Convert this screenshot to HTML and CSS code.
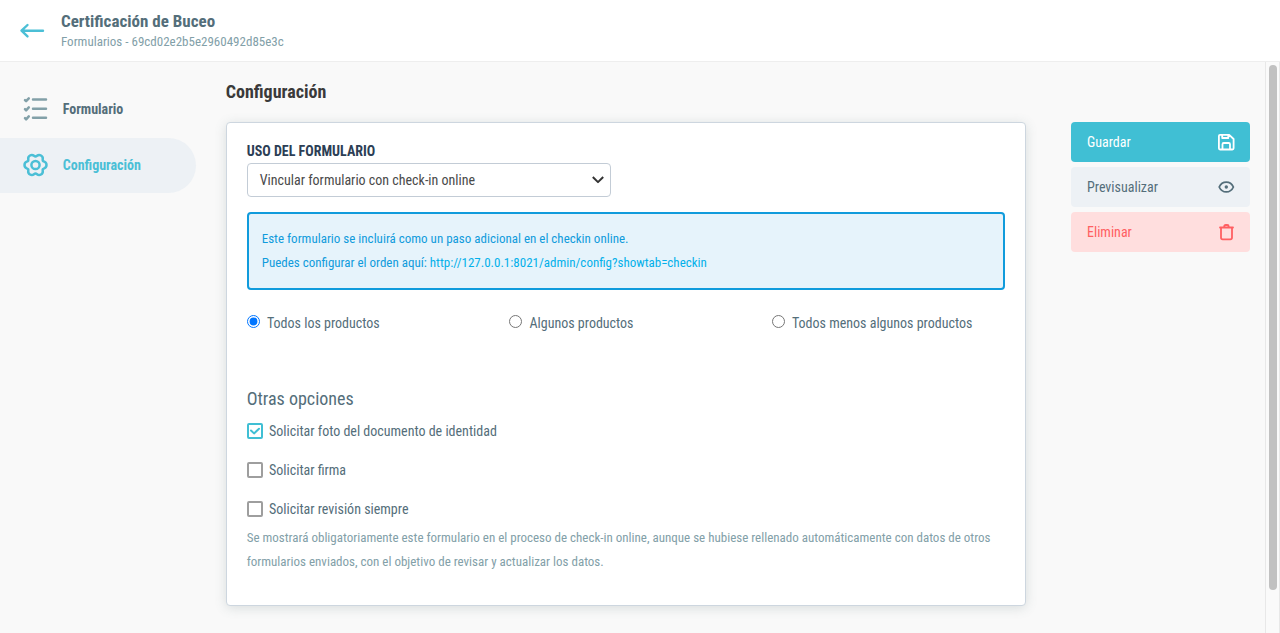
FILE: index.html
```html
<!DOCTYPE html>
<html lang="es">
<head>
<meta charset="utf-8">
<title>Certificación de Buceo</title>
<link rel="stylesheet" href="styles.css">
</head>
<body>
<header class="topbar">
  <svg class="back" width="26" height="18" viewBox="0 0 26 18"><path d="M24 9.700H3M8.500 4L2.500 9.700L8.500 15.400"/></svg>
  <div class="titles">
    <h1><span class="t">Certificación de Buceo</span></h1>
    <p><span class="t">Formularios - 69cd02e2b5e2960492d85e3c</span></p>
  </div>
</header>
<div class="shell">
  <nav class="side">
    <a class="item">
      <svg width="26" height="26" viewBox="0 0 26 26"><path d="M11 3.600h13M11 12.700h13M11 21.700h13M3 4.100l1.100 1.100L6.800 2.300M3 13.200l1.100 1.100L6.800 11.400M3 22.200l1.100 1.100L6.800 20.400"/></svg>
      <span class="t">Formulario</span>
    </a>
    <a class="item active">
      <svg width="26" height="26" viewBox="-.5 0 26 26"><path d="M24 13C24 16.800 21.200 15.800 20.360 17.250C19.500 18.700 21.800 20.630 18.500 22.530C15.200 24.430 14.700 21.500 13 21.500C11.300 21.500 10.800 24.430 7.500 22.530C4.200 20.630 6.500 18.700 5.640 17.250C4.800 15.800 2 16.800 2 13C2 9.200 4.800 10.200 5.640 8.750C6.500 7.300 4.200 5.370 7.500 3.470C10.800 1.570 11.300 4.500 13 4.500C14.700 4.500 15.200 1.570 18.500 3.470C21.800 5.370 19.500 7.300 20.360 8.750C21.200 10.200 24 9.200 24 13Z"/><circle cx="13" cy="13" r="4.100"/></svg>
      <span class="t">Configuración</span>
    </a>
  </nav>
  <main class="content">
    <h2><span class="t">Configuración</span></h2>
    <section class="card">
      <label class="caption"><span class="t">USO DEL FORMULARIO</span></label>
      <div class="select"><span class="t">Vincular formulario con check-in online</span>
        <svg width="14" height="10" viewBox="0 0 14 10"><path d="M1.800 2L7 7.100L12.200 2"/></svg>
      </div>
      <div class="notice">
        <p><span class="t">Este formulario se incluirá como un paso adicional en el checkin online.</span></p>
        <p><span class="t">Puedes configurar el orden aquí: <a>http://127.0.0.1:8021/admin/config?showtab=checkin</a></span></p>
      </div>
      <div class="radios">
        <label><input type="radio" name="scope" checked><span class="t">Todos los productos</span></label>
        <label><input type="radio" name="scope"><span class="t">Algunos productos</span></label>
        <label><input type="radio" name="scope"><span class="t">Todos menos algunos productos</span></label>
      </div>
      <h3><span class="t">Otras opciones</span></h3>
      <div class="checks">
        <label><i class="box on"><svg width="12" height="12" viewBox="0 0 12 12"><path d="M2 5.500L5 8.400L10 3.700"/></svg></i><span class="t">Solicitar foto del documento de identidad</span></label>
        <label><i class="box"></i><span class="t">Solicitar firma</span></label>
        <label><i class="box"></i><span class="t">Solicitar revisión siempre</span></label>
      </div>
      <p class="hint"><span class="t">Se mostrará obligatoriamente este formulario en el proceso de check-in online, aunque se hubiese rellenado automáticamente con datos de otros<br>formularios enviados, con el objetivo de revisar y actualizar los datos.</span></p>
    </section>
  </main>
  <aside class="actions">
    <a class="btn save"><span class="t">Guardar</span>
      <svg width="18" height="18" viewBox="0 0 18 18"><path d="M3 1.900H12.200L16.600 6V15.300Q16.600 16.500 15.400 16.500H3Q1.900 16.500 1.900 15.300V3Q1.900 1.900 3 1.900ZM5.200 2V5H11.300V2M5.500 16.500V11.200Q5.500 10 6.700 10H11.800Q13 10 13 11.200V16.500"/></svg></a>
    <a class="btn view"><span class="t">Previsualizar</span>
      <svg width="18" height="18" viewBox="0 0 18 18"><path d="M2.200 9C5.200 2.400 13.400 2.400 16.400 9C13.400 15.600 5.200 15.600 2.200 9Z"/><circle class="dot" cx="9.300" cy="9" r="1.700"/></svg></a>
    <a class="btn delete"><span class="t">Eliminar</span>
      <svg width="18" height="18" viewBox="0 0 18 18"><path d="M3 4.500H16M4 4.700V14.600Q4 16.400 5.700 16.400H13.300Q15 16.400 15 14.600V4.700M7.200 4.200V3.500Q7.200 2 8.700 2H10.200Q11.700 2 11.700 3.500V4.200"/></svg></a>
  </aside>
  <div class="scroll"><div class="thumb"></div></div>
</div>
</body>
</html>
```
FILE: styles.css
```css
* { box-sizing: border-box; }
body { margin: 0; height: 633px; overflow: hidden; background: #f9f9f9; color: #546e7a; font: 14px/24px "Roboto Condensed", Roboto, sans-serif; font-stretch: 75%; }
h1, h2, h3, p { margin: 0; }
svg { display: block; flex: none; fill: none; stroke: currentColor; stroke-width: 2; stroke-linecap: round; stroke-linejoin: round; }
.t { white-space: nowrap; }
.topbar { display: flex; height: 62px; background: #fff; border-bottom: 1px solid #eee; padding: 11px 0 0 19px; gap: 16px; }
.back { margin-top: 10px; color: #4bbfd6; stroke-width: 2.400; }
.titles h1 { font-size: 17px; line-height: 20px; font-weight: 700; }
.titles p { font-size: 13px; line-height: 22px; color: #82a0a8; }
.shell { display: flex; height: 571px; }
.side { width: 225.700px; padding-top: 20px; }
.item { display: flex; align-items: center; width: 196px; height: 55px; padding: 0 0 2px 22px; gap: 14.700px; border-radius: 0 28px 28px 0; font-weight: 700; margin-bottom: 1px; }
.item svg { color: #82a0a8; stroke-width: 2.500; }
.item.active, .item.active svg { color: #4bbfd6; }
.active { background: #edf1f5; }
.content { width: 800.300px; padding-top: 18px; }
h2 { font-size: 18px; color: #3a3a3a; font-weight: 700; margin-bottom: 18px; }
.card { height: 484px; background: #fff; border: 1px solid #cdd6df; border-radius: 4px; box-shadow: 0 2px 12px rgba(84, 110, 110, .2); padding: 16px 20px; }
.caption { display: block; height: 24px; color: #2c3e55; font-weight: 700; }
.select { display: flex; align-items: center; justify-content: space-between; width: 364px; height: 34px; border: 1px solid #c3ccd6; border-radius: 4px; padding: 0 5px 0 12px; color: #4a4a4a; }
.select svg { color: #333; stroke-linecap: butt; }
.notice { margin-top: 15px; height: 78px; border: 2px solid #109bdc; border-radius: 4px; background: #e6f3fb; color: #109bdc; padding: 13px; font-size: 13px; }
.notice a { color: #03b0ea; }
.radios { display: grid; grid-template-columns: 262.500px 262.500px 1fr; margin-top: 21px; height: 76px; }
.radios label { display: flex; align-items: flex-start; gap: 7.300px; }
.radios input { margin: 4px 0 0; width: 13px; height: 13px; }
h3 { font-size: 18px; font-weight: 400; }
.checks { display: flex; flex-direction: column; gap: 15px; margin-top: 8px; }
.checks label { display: flex; align-items: center; gap: 6.300px; }
.box { width: 16px; height: 16px; border: 2px solid #9e9e9e; border-radius: 2px; }
.on { border-color: #40bfd4; color: #40bfd4; }
.hint { font-size: 13px; color: #82a0a8; margin-top: 5px; }
.actions { display: flex; flex-direction: column; gap: 5px; width: 179px; margin: 60px 15px 0 45px; }
.btn { display: flex; align-items: center; justify-content: space-between; height: 40px; border-radius: 4px; padding: 0 15px 0 16px; }
.btn svg { stroke-width: 1.800; }
.save { background: #40bfd4; color: #fff; }
.view { background: #edf1f5; }
.delete { background: #ffdede; color: #ff5f62; }
.dot { fill: currentColor; stroke: none; }
.scroll { width: 15px; background: #fafafa; border: solid #e8e8e8; border-width: 0 1px; padding: 3px 0 0 3px; }
.thumb { width: 8px; height: 525px; background: #c1c1c1; border-radius: 4px; }
```
